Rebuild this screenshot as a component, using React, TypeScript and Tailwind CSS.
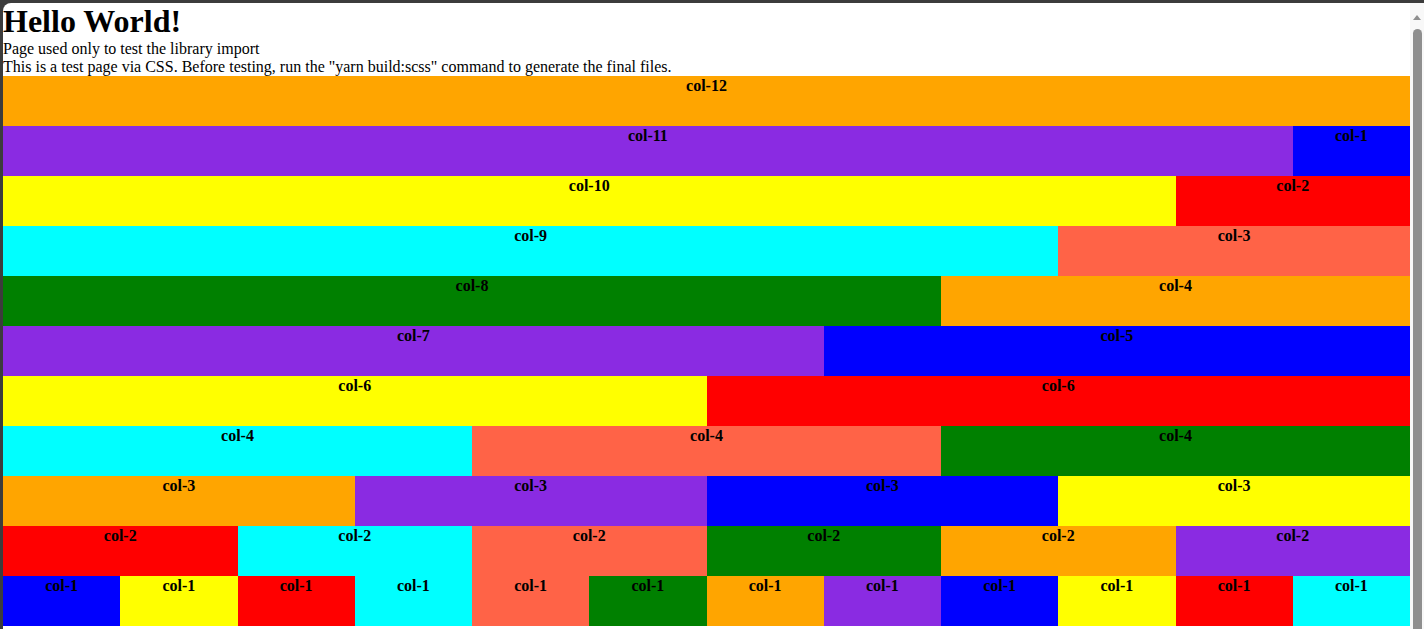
const COLORS = [
  'bg-[#ffa500]',
  'bg-[#8a2be2]',
  'bg-[#0000ff]',
  'bg-[#ffff00]',
  'bg-[#ff0000]',
  'bg-[#00ffff]',
  'bg-[#ff6347]',
  'bg-[#008000]',
];

const SPAN: Record<number, string> = {
  1: 'col-span-1',
  2: 'col-span-2',
  3: 'col-span-3',
  4: 'col-span-4',
  5: 'col-span-5',
  6: 'col-span-6',
  7: 'col-span-7',
  8: 'col-span-8',
  9: 'col-span-9',
  10: 'col-span-10',
  11: 'col-span-11',
  12: 'col-span-12',
};

const rows: number[][] = [
  [12],
  [11, 1],
  [10, 2],
  [9, 3],
  [8, 4],
  [7, 5],
  [6, 6],
  [4, 4, 4],
  [3, 3, 3, 3],
  [2, 2, 2, 2, 2, 2],
  [1, 1, 1, 1, 1, 1, 1, 1, 1, 1, 1, 1],
];

export default function App() {
  let colorIndex = 0;

  return (
    <div className="h-[629px] w-[1424px] overflow-hidden bg-[#3c3c3c] pt-[3px] pl-[3px]">
      <div className="flex h-full rounded-tl-[8px] bg-white">
        {/* Page content */}
        <div
          className="w-[1407px] text-black"
          style={{ fontFamily: '"Liberation Serif", "Times New Roman", serif' }}
        >
          <h1 className="text-[32px] font-bold leading-[normal]">Hello World!</h1>
          <div className="text-[16px] leading-[18px]">Page used only to test the library import</div>
          <div className="text-[16px] leading-[18px]">
            This is a test page via CSS. Before testing, run the "yarn build:scss" command to generate the final files.
          </div>

          {rows.map((row, i) => (
            <div key={i} className="grid grid-cols-12">
              {row.map((span, j) => {
                const color = COLORS[colorIndex % COLORS.length];
                colorIndex++;
                return (
                  <div
                    key={j}
                    className={`${SPAN[span]} ${color} h-[50px] pt-[1px] text-center text-[16px] font-bold leading-[18px]`}
                  >
                    col-{span}
                  </div>
                );
              })}
            </div>
          ))}
        </div>

        {/* Scrollbar */}
        <div className="flex w-[14px] flex-col items-center bg-[#f8f8f8]">
          <div className="mt-[12px] h-0 w-0 border-x-[4px] border-b-[5px] border-x-transparent border-b-[#8f8f8f]" />
          <div className="mt-[9px] w-[9px] flex-1 rounded-t-full bg-[#8f8f8f]" />
        </div>
      </div>
    </div>
  );
}
